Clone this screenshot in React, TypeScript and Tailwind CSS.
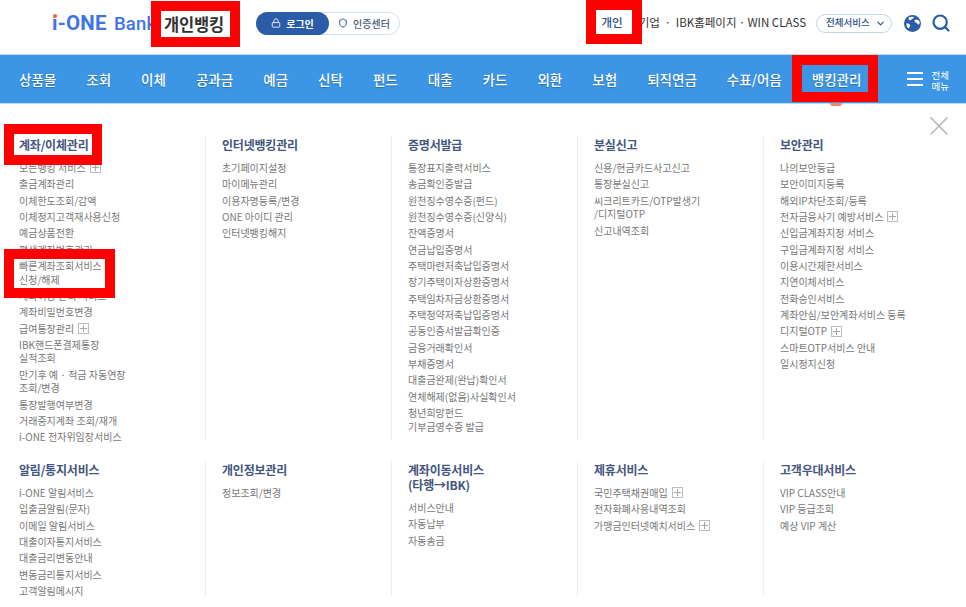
import { Lock, Search, Shield, ChevronDown } from "lucide-react";

const font = "font-['Noto_Sans_CJK_KR','Noto_Sans',sans-serif]";

const navItems = ["상품몰", "조회", "이체", "공과금", "예금", "신탁", "펀드", "대출", "카드", "외환", "보험", "퇴직연금", "수표/어음", "뱅킹관리"];

type Group = { title: string[]; items: (string | string[] | { text: string; plus: true })[] };

const topRow: Group[] = [
  {
    title: ["계좌/이체관리"],
    items: [
      { text: "모든뱅킹 서비스", plus: true },
      "출금계좌관리",
      "이체한도조회/감액",
      "이체정지고객재사용신청",
      "예금상품전환",
      "평생계좌번호관리",
      ["빠른계좌조회서비스", "신청/해제"],
      "계좌이동 관리 서비스",
      "계좌비밀번호변경",
      { text: "급여통장관리", plus: true },
      ["IBK핸드폰결제통장", "실적조회"],
      ["만기후 예 · 적금 자동연장", "조회/변경"],
      "통장발행여부변경",
      "거래중지계좌 조회/재개",
      "i-ONE 전자위임장서비스",
    ],
  },
  {
    title: ["인터넷뱅킹관리"],
    items: ["초기페이지설정", "마이메뉴관리", "이용자명등록/변경", "ONE 아이디 관리", "인터넷뱅킹해지"],
  },
  {
    title: ["증명서발급"],
    items: [
      "통장표지출력서비스",
      "송금확인증발급",
      "원천징수영수증(펀드)",
      "원천징수영수증(신양식)",
      "잔액증명서",
      "연금납입증명서",
      "주택마련저축납입증명서",
      "장기주택이자상환증명서",
      "주택임차자금상환증명서",
      "주택청약저축납입증명서",
      "공동인증서발급확인증",
      "금융거래확인서",
      "부채증명서",
      "대출금완제(완납)확인서",
      "연체해제(없음)사실확인서",
      ["청년희망펀드", "기부금영수증 발급"],
    ],
  },
  {
    title: ["분실신고"],
    items: ["신용/현금카드사고신고", "통장분실신고", ["씨크리트카드/OTP발생기", "/디지털OTP"], "신고내역조회"],
  },
  {
    title: ["보안관리"],
    items: [
      "나의보안등급",
      "보안이미지등록",
      "해외IP차단조회/등록",
      { text: "전자금융사기 예방서비스", plus: true },
      "신입금계좌지정 서비스",
      "구입금계좌지정 서비스",
      "이용시간제한서비스",
      "지연이체서비스",
      "전화승인서비스",
      "계좌안심/보안계좌서비스 등록",
      { text: "디지털OTP", plus: true },
      "스마트OTP서비스 안내",
      "일시정지신청",
    ],
  },
];

const bottomRow: Group[] = [
  {
    title: ["알림/통지서비스"],
    items: ["i-ONE 알림서비스", "입출금알림(문자)", "이메일 알림서비스", "대출이자통지서비스", "대출금리변동안내", "변동금리통지서비스", "고객알림메시지"],
  },
  { title: ["개인정보관리"], items: ["정보조회/변경"] },
  { title: ["계좌이동서비스", "(타행→IBK)"], items: ["서비스안내", "자동납부", "자동송금"] },
  {
    title: ["제휴서비스"],
    items: [{ text: "국민주택채권매입", plus: true }, "전자화폐사용내역조회", { text: "가맹금인터넷예치서비스", plus: true }],
  },
  { title: ["고객우대서비스"], items: ["VIP CLASS안내", "VIP 등급조회", "예상 VIP 계산"] },
];

function PlusBox() {
  return (
    <span className="ml-[4px] flex h-[11px] w-[11px] shrink-0 items-center justify-center border border-[#bdbdbd]">
      <span className="relative block h-[7px] w-[7px]">
        <span className="absolute left-0 top-[3px] h-px w-[7px] bg-[#a5a5a5]" />
        <span className="absolute left-[3px] top-0 h-[7px] w-px bg-[#a5a5a5]" />
      </span>
    </span>
  );
}

function Column({ group, first, height }: { group: Group; first: boolean; height: string }) {
  return (
    <div className={`flex flex-col ${height} ${first ? "w-[205px] pl-[19px]" : "w-[186px] border-l border-[#eeeeee] pl-[16px]"}`}>
      <div className="pt-[1px] text-[12px] font-bold leading-[15px] tracking-[-0.2px] text-[#44557f]">
        {group.title.map((t, i) => (
          <span key={t}>
            {i > 0 && <br />}
            {t}
          </span>
        ))}
      </div>
      <ul className="mt-[9px] flex flex-col gap-[2.85px] text-[10px] leading-[13.5px] text-[#777777]">
        {group.items.map((item, i) => (
          <li key={i} className="whitespace-nowrap">
            {typeof item === "string" ? (
              item
            ) : Array.isArray(item) ? (
              item.map((line) => <div key={line}>{line}</div>)
            ) : (
              <div className="flex h-[13.5px] items-center">
                {item.text}
                <PlusBox />
              </div>
            )}
          </li>
        ))}
      </ul>
    </div>
  );
}

function GlobeIcon() {
  return (
    <svg width="17" height="17" viewBox="0 0 17 17" className="ml-[12px]">
      <circle cx="8.5" cy="8.5" r="8.5" fill="#2b5ca8" />
      <path d="M5 2.2c2-.9 4.4-.6 5.2.4-.6 1-2 .8-2.6 1.6-.5.9-1.6 1.2-2.4.8-.8-.5-.9-2-.2-2.8z" fill="#fff" />
      <path d="M10.5 5.2c1.6-.7 3.8-.3 5 1 .5 1.4.1 2.8-.8 3.5-.8-.7-1.6-.8-2-1.6-.8-.2-2.4-1.6-2.2-2.9z" fill="#fff" />
      <path d="M2.5 8.2c1.4-.3 2.8.5 3.6 1.6.5 1-.3 1.7-.7 2.6-.3.8-.9 1.2-1.5.7-1-1.2-1.7-3.2-1.4-4.9z" fill="#fff" />
    </svg>
  );
}

// red marks that were painted over the screenshot
function RedMark({ className }: { className: string }) {
  return <div className={`absolute border-[10px] border-[#ff0000] ${className}`} />;
}

export default function App() {
  return (
    <div className={`relative h-[607px] w-[966px] overflow-hidden bg-white ${font}`}>
      <header className="flex h-[54px] items-center pb-[8px]">
        <div className="relative ml-[52px] w-[112px] whitespace-nowrap font-['Roboto',sans-serif] text-[20.5px] font-bold leading-none tracking-[0.2px] text-[#3f74e6]">
          <span className="absolute left-[0.5px] top-[1px] h-[4.5px] w-[4.5px] rounded-full bg-[#ef6a3a]" />
          i-ONE <span className="ml-[2px] text-[18.5px] font-medium">Bank</span>
        </div>
        <div className="w-[60px] translate-y-[1px] whitespace-nowrap text-[16.5px] font-bold leading-none tracking-[-0.2px] text-[#333]">개인뱅킹</div>
        <div className="ml-[32px] flex h-[23px] w-[144px] items-center rounded-full border border-[#d5e0f2] text-[10px] font-bold">
          <div className="-ml-px flex h-[23px] w-[73px] items-center justify-center gap-[5px] rounded-full bg-[#2b5ca8] text-white">
            <Lock size={10} strokeWidth={2} />
            로그인
          </div>
          <div className="flex flex-1 items-center justify-center gap-[5px] font-medium text-[#4a5a78]">
            <Shield size={10} strokeWidth={2.4} className="text-[#2b4f8f]" />
            인증센터
          </div>
        </div>
        <div className="ml-auto flex items-center pr-[15px] text-[11.5px] leading-none text-[#333]">
          <span className="mr-[16px] font-medium text-[#2b4f8f]">개인</span>
          <span>기업</span>
          <span className="w-[16px] text-center">·</span>
          <span>IBK홈페이지</span>
          <span className="w-[11px] text-center">·</span>
          <span className="whitespace-nowrap">WIN CLASS</span>
          <div className="ml-[10px] flex h-[19px] w-[76px] items-center justify-between rounded-full border border-[#c5d3ea] pl-[9px] pr-[5px] text-[9.5px] font-medium text-[#2b4f8f]">
            전체서비스
            <ChevronDown size={11} strokeWidth={2.4} />
          </div>
          <GlobeIcon />
          <Search size={20} strokeWidth={2.6} className="ml-[10px] text-[#2b5ca8]" />
        </div>
      </header>

      <nav className="flex h-[50px] items-center border-y border-[#bcd9f3] bg-[#3c96e5] pl-[19px] text-white">
        <div className="flex gap-[30px] text-[13.5px] font-medium [text-shadow:0_1px_1px_rgba(0,0,0,0.25)]">
          {navItems.map((n) => (
            <span key={n}>{n}</span>
          ))}
        </div>
        <div className="ml-[46px] flex flex-col gap-[4px]">
          <span className="h-[2px] w-[16px] bg-white" />
          <span className="h-[2px] w-[16px] bg-white" />
          <span className="h-[2px] w-[16px] bg-white" />
        </div>
        <div className="ml-[8px] mt-[3px] text-center text-[9.5px] leading-[11px]">
          전체
          <br />
          메뉴
        </div>
      </nav>

      <main className="pt-[32px]">
        <div className="flex">
          {topRow.map((g, i) => (
            <Column key={i} group={g} first={i === 0} height="h-[305px]" />
          ))}
        </div>
        <div className="mt-[20px] flex">
          {bottomRow.map((g, i) => (
            <Column key={i} group={g} first={i === 0} height="h-[135px]" />
          ))}
        </div>
      </main>

      {/* tab notch under the active menu */}
      <div className="absolute left-[830px] top-[103px] h-[3px] w-[12px] rounded-b-full bg-[#f58a5c]" />

      <svg className="absolute left-[930px] top-[117px]" width="18" height="18" viewBox="0 0 18 18" fill="none" stroke="#b5b5b5" strokeWidth="1.5">
        <path d="M0.5 0.5l17 17M17.5 0.5l-17 17" />
      </svg>

      <RedMark className="left-[151px] top-[1px] h-[46px] w-[89px]" />
      <RedMark className="left-[586px] top-0 h-[44px] w-[56px]" />
      <RedMark className="left-[792px] top-[55px] h-[47px] w-[86px]" />
      <RedMark className="left-[4px] top-[124px] h-[41px] w-[98px]" />
      <RedMark className="left-[4px] top-[249px] h-[49px] w-[111px]" />
    </div>
  );
}
